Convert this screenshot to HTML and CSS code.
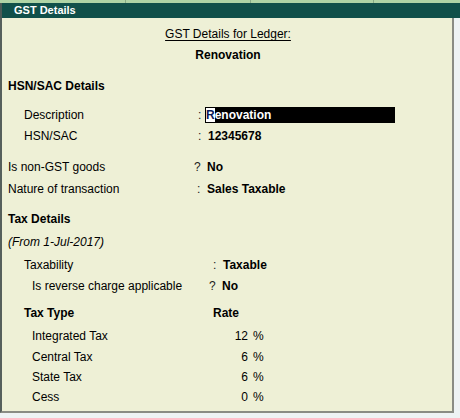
FILE: index.html
```
<!DOCTYPE html>
<html>
<head>
<meta charset="utf-8">
<link rel="stylesheet" href="styles.css">
</head>
<body>
<div class="strip"><span class="seg s1"></span><span class="seg s2"></span><span class="seg s3"></span><span class="seg s4"></span></div>
<div class="titlebar">GST Details</div>
<div class="panel">
  <div class="row center r1"><span class="ul">GST Details for Ledger:</span></div>
  <div class="row center bold r2">Renovation</div>
  <div class="row bold r3">HSN/SAC Details</div>
  <div class="row r4 ind1"><span class="lab w1">Description</span><span class="sep">:</span><span class="field"><span class="cur">R</span>enovation</span></div>
  <div class="row r5 ind1"><span class="lab w1">HSN/SAC</span><span class="sep">:</span><span class="val">12345678</span></div>
  <div class="row r6"><span class="lab w0">Is non-GST goods</span><span class="sep q">?</span><span class="val">No</span></div>
  <div class="row r7"><span class="lab w0">Nature of transaction</span><span class="sep">:</span><span class="val">Sales Taxable</span></div>
  <div class="row bold r8">Tax Details</div>
  <div class="row italic r9">(From 1-Jul-2017)</div>
  <div class="row r10 ind1"><span class="lab w2">Taxability</span><span class="sep">:</span><span class="val">Taxable</span></div>
  <div class="row r11 ind2"><span class="lab w3">Is reverse charge applicable</span><span class="sep q">?</span><span class="val">No</span></div>
  <div class="row r12 ind1 bold"><span class="lab w4">Tax Type</span><span>Rate</span></div>
  <div class="row r13 ind2"><span class="lab w5">Integrated Tax</span><span class="num">12</span><span class="pct">%</span></div>
  <div class="row r14 ind2"><span class="lab w5">Central Tax</span><span class="num">6</span><span class="pct">%</span></div>
  <div class="row r15 ind2"><span class="lab w5">State Tax</span><span class="num">6</span><span class="pct">%</span></div>
  <div class="row r16 ind2"><span class="lab w5">Cess</span><span class="num">0</span><span class="pct">%</span></div>
</div>
</body>
</html>
```
FILE: styles.css
```
html, body {
  margin: 0;
  padding: 0;
}
body {
  width: 460px;
  height: 418px;
  overflow: hidden;
  background: #eef3f4;
  font-family: "Liberation Sans", Arial, sans-serif;
  font-size: 12px;
  color: #000;
}
.strip {
  height: 3px;
  display: flex;
  background: #b0d4a6;
}
.seg {
  height: 3px;
  border-right: 1px solid #88aa86;
}
.s1 { width: 125px; }
.s2 { width: 124px; }
.s3 { width: 122px; }
.s4 { flex: 1; border-right: none; }
.titlebar {
  height: 15px;
  line-height: 15px;
  background: #11504a;
  color: #fff;
  font-weight: bold;
  font-size: 11px;
  padding-left: 12px;
  border-left: 2px solid #4b5a56;
  box-sizing: border-box;
}
.panel {
  width: 454px;
  height: 395px;
  box-sizing: border-box;
  background: #eef0d6;
  border-left: 2px solid #56605c;
  border-right: 2px solid #8a8c84;
  border-bottom: 2px solid #8a8c84;
  padding: 0 0 0 6px;
  overflow: hidden;
}
.row {
  display: flex;
  align-items: center;
  height: 20px;
  line-height: 20px;
  white-space: nowrap;
}
.center { justify-content: center; padding-right: 4px; }
.bold { font-weight: bold; }
.italic { font-style: italic; }
.ul {
  text-decoration: underline;
  text-underline-offset: 2px;
}
.ind1 { padding-left: 16px; }
.ind2 { padding-left: 24px; }
.lab { display: inline-block; }
.w0 { width: 189px; }
.w1 { width: 174px; }
.w2 { width: 189px; }
.w3 { width: 180px; }
.w4 { width: 189px; }
.w5 { width: 185px; }
.sep { width: 10px; color: #222; }
.q { width: 13px; margin-left: -3px; }
.val { font-weight: bold; }
.field {
  display: inline-block;
  width: 190px;
  height: 16px;
  line-height: 16px;
  background: #000;
  color: #fff;
  font-weight: bold;
  margin-left: -3px;
}
.cur {
  display: inline-block;
  background: #fff;
  color: #0a1a5a;
  height: 14px;
  line-height: 14px;
  margin: 1px 0 0 1px;
  vertical-align: top;
}
.num { width: 31px; text-align: right; }
.pct { margin-left: 5px; }
.r1 { margin-top: 6px; }
.r2 { margin-top: 1px; }
.r3 { margin-top: 11px; }
.r4 { margin-top: 9px; }
.r5 { margin-top: 1px; }
.r6 { margin-top: 11px; }
.r7 { margin-top: 2px; }
.r8 { margin-top: 10px; }
.r9 { margin-top: 3px; }
.r10 { margin-top: 3px; }
.r11 { margin-top: 1px; }
.r12 { margin-top: 7px; }
.r13 { margin-top: 3px; }
.r14 { margin-top: 1px; }
.r15 { margin-top: 0; }
.r16 { margin-top: 0; }
```
